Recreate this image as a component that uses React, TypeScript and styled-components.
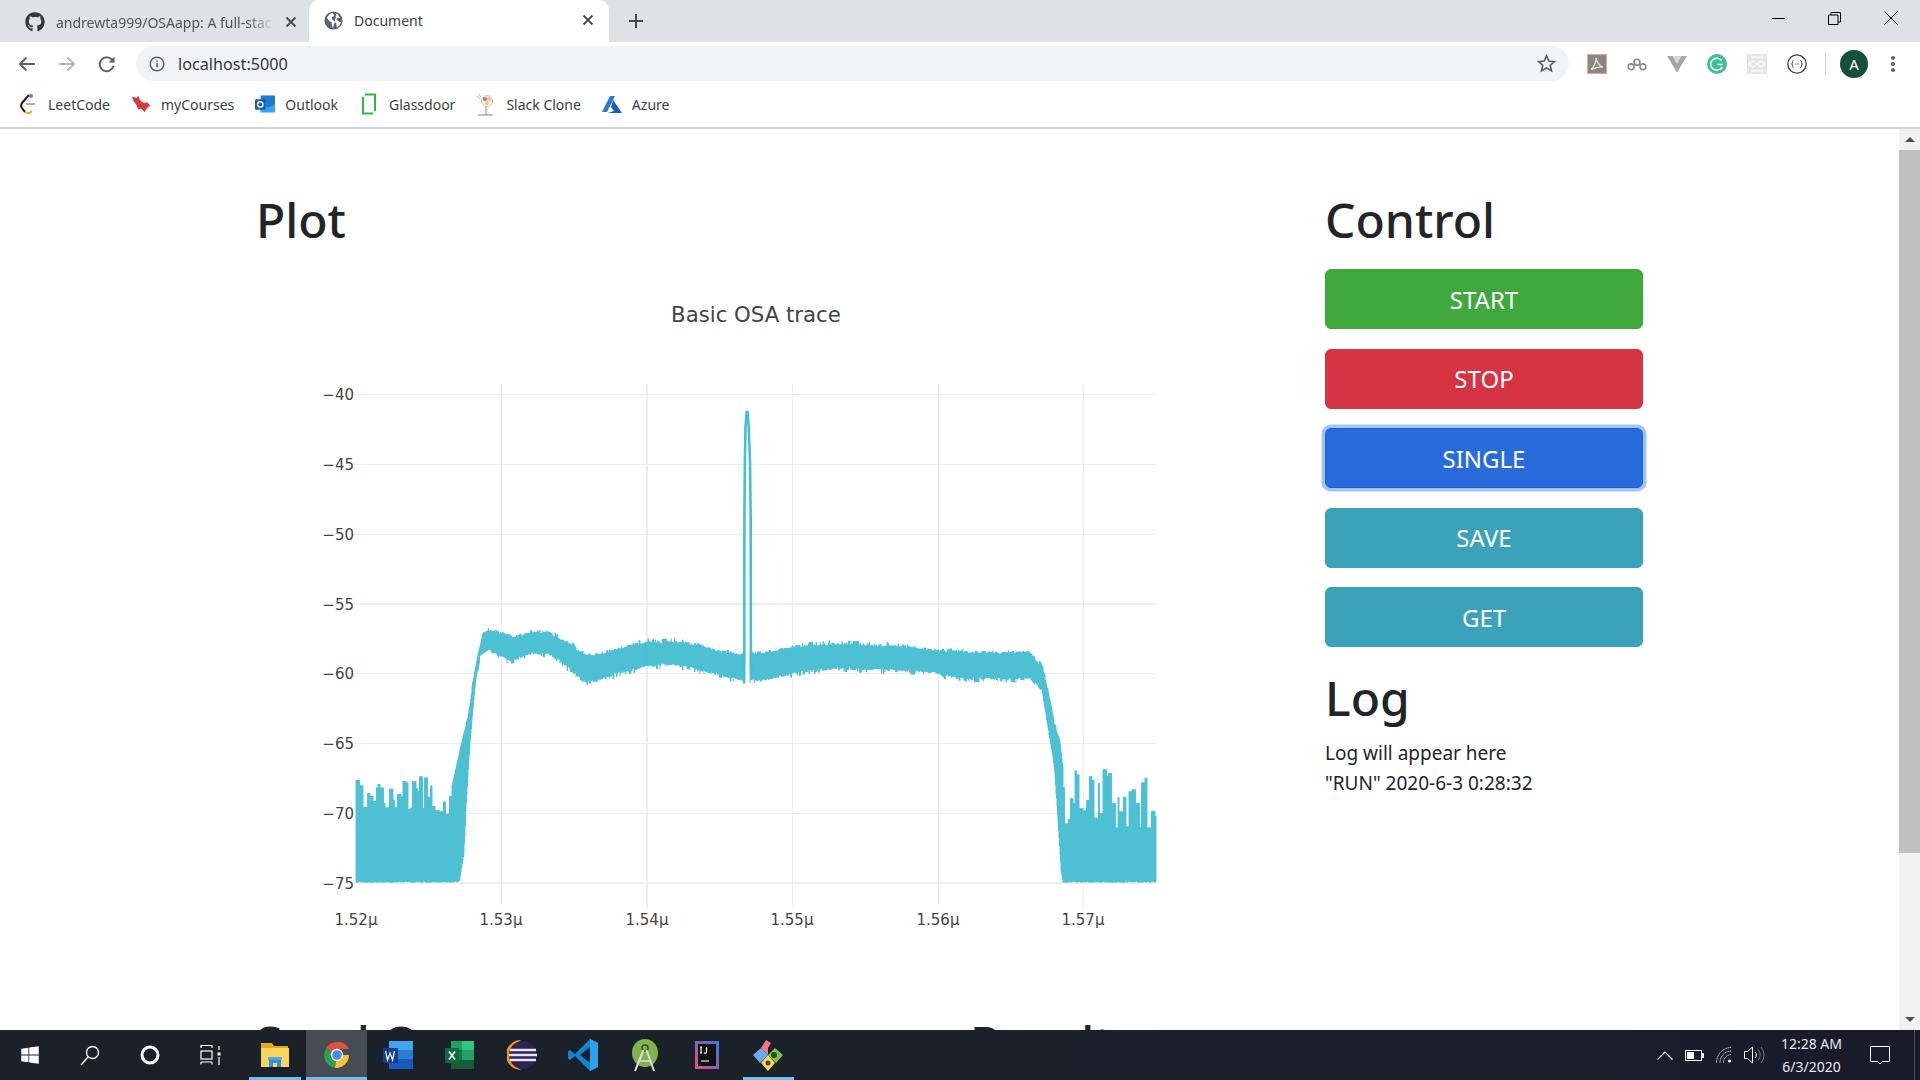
import styled, { createGlobalStyle } from "styled-components";
import { FaGithub, FaWindows } from "react-icons/fa";

const GlobalStyle = createGlobalStyle`
  html, body {
    margin: 0;
    padding: 0;
    height: 100%;
    overflow: hidden;
    background: #fff;
  }
  body {
    font-family: "Noto Sans", "Open Sans", sans-serif;
  }
  #root {
    height: 100%;
  }
`;

const colors = {
  frame: "#dee1e6",
  chromeText: "#3c4043",
  chromeIcon: "#5f6368",
  ink: "#212529",
  trace: "#47bed3",
  grid: "#eeeeee",
  tick: "#444444",
};

const Screen = styled.div`
  width: 1920px;
  height: 1080px;
  display: flex;
  flex-direction: column;
  overflow: hidden;
`;

/* ---------- browser chrome ---------- */

const TabStrip = styled.div`
  height: 42px;
  flex: none;
  display: flex;
  align-items: flex-end;
  background: ${colors.frame};
  padding-left: 14px;
`;

const Tab = styled.div<{ $active?: boolean }>`
  height: ${({ $active }) => ($active ? "42px" : "40px")};
  width: ${({ $active }) => ($active ? "300px" : "295px")};
  box-sizing: border-box;
  display: flex;
  align-items: center;
  gap: 11px;
  padding: 0 ${({ $active }) => ($active ? "15px" : "12px")} 0
    ${({ $active }) => ($active ? "15px" : "11px")};
  background: ${({ $active }) => ($active ? "#fff" : "transparent")};
  border-radius: 10px 10px 0 0;
  font-size: 14px;
  color: ${({ $active }) => ($active ? colors.chromeText : "#50545a")};
  margin-top: auto;
  padding-bottom: ${({ $active }) => ($active ? "2px" : "0")};
  svg {
    flex: none;
  }
`;

const TabTitle = styled.span<{ $fade?: boolean }>`
  flex: 1;
  overflow: hidden;
  white-space: nowrap;
  ${({ $fade }) =>
    $fade
      ? "mask-image: linear-gradient(to right, #000 88%, transparent 100%);"
      : ""}
`;

const NewTab = styled.div`
  width: 54px;
  display: flex;
  justify-content: center;
  align-self: center;
`;

const WindowButtons = styled.div`
  margin-left: auto;
  align-self: stretch;
  display: flex;
  align-items: center;
  padding: 0 22px 6px 0;
  gap: 43px;
`;

const Toolbar = styled.div`
  height: 43px;
  flex: none;
  display: flex;
  align-items: center;
  background: #fff;
  padding-left: 17px;
`;

const NavButtons = styled.div`
  display: flex;
  gap: 20px;
  margin-right: 19px;
`;

const AddressBar = styled.div`
  width: 1433px;
  height: 35px;
  display: flex;
  align-items: center;
  border-radius: 18px;
  background: #f1f3f4;
  padding: 0 13px 0 13px;
  box-sizing: border-box;
  font-size: 16.2px;
  color: #33363a;
  gap: 13px;
`;

const UrlText = styled.span`
  flex: 1;
`;

const Extensions = styled.div`
  display: flex;
  align-items: center;
  gap: 20px;
  margin-left: 18px;
`;

const Divider = styled.div`
  width: 1px;
  height: 21px;
  background: #c8cacc;
  margin: 0 -6px 0 -2px;
`;

const Avatar = styled.div`
  width: 28px;
  height: 28px;
  border-radius: 50%;
  background: #14503c;
  color: #fff;
  font-size: 15px;
  display: flex;
  align-items: center;
  justify-content: center;
`;

const MenuButton = styled.div`
  display: flex;
  margin-left: 2px;
`;

const BookmarksBar = styled.div`
  height: 44px;
  flex: none;
  box-sizing: border-box;
  display: flex;
  align-items: center;
  gap: 21px;
  padding: 0 0 4px 18px;
  background: #fff;
  border-bottom: 2px solid #d4d5d7;
`;

const Bookmark = styled.div`
  display: flex;
  align-items: center;
  gap: 10px;
  font-size: 14px;
  color: ${colors.chromeText};
`;

const BookmarkIcon = styled.span`
  width: 20px;
  display: flex;
  justify-content: center;
`;

/* ---------- page ---------- */

const Viewport = styled.div`
  flex: 1;
  min-height: 0;
  display: flex;
`;

const Page = styled.main`
  flex: 1;
  overflow: hidden;
  padding: 61px 0 0 256px;
  color: ${colors.ink};
`;

const TopRow = styled.div`
  display: grid;
  grid-template-columns: 1069px 318px;
`;

const BottomRow = styled.div`
  display: grid;
  grid-template-columns: 714px 1fr;
  margin-top: 43px;
`;

const Heading = styled.h1<{ $flush?: boolean }>`
  margin: 0 0 ${({ $flush }) => ($flush ? "0" : "10px")};
  font-size: 48px;
  line-height: 60px;
  font-weight: 500;
`;

const ChartFrame = styled.svg`
  display: block;
  width: 1000px;
  height: 720px;
`;

const ChartTitle = styled.text`
  font-family: "DejaVu Sans", sans-serif;
  font-size: 21.25px;
  fill: ${colors.tick};
  text-anchor: middle;
`;

const TickLabel = styled.text<{ $anchor: string }>`
  font-family: "DejaVu Sans", sans-serif;
  font-size: 15px;
  fill: ${colors.tick};
  text-anchor: ${({ $anchor }) => $anchor};
`;

const Controls = styled.div`
  display: flex;
  flex-direction: column;
  gap: 19.5px;
  margin: 19px 0 21px;
`;

const ActionButton = styled.button<{ $color: string; $focused?: boolean }>`
  height: 60px;
  width: 100%;
  border: 1px solid ${({ $color, $focused }) => ($focused ? "#1f5fc8" : $color)};
  border-radius: 6px;
  background: ${({ $color }) => $color};
  color: #fff;
  font-family: inherit;
  font-size: 24px;
  box-shadow: ${({ $focused }) => ($focused ? "0 0 0 3.5px #9fc5fd" : "none")};
`;

const LogLine = styled.div`
  font-size: 19px;
  line-height: 30px;
`;

const Scrollbar = styled.div`
  width: 21px;
  flex: none;
  display: flex;
  flex-direction: column;
  align-items: center;
  background: #f1f1f1;
`;

const ScrollArrow = styled.div<{ $down?: boolean }>`
  width: 0;
  height: 0;
  flex: none;
  margin: 8px 0;
  border-left: 5px solid transparent;
  border-right: 5px solid transparent;
  ${({ $down }) =>
    $down ? "border-top: 5px solid #505050;" : "border-bottom: 5px solid #505050;"}
`;

const ScrollThumb = styled.div`
  width: 100%;
  height: 703px;
  margin-bottom: auto;
  background: #c1c1c1;
`;

/* ---------- taskbar ---------- */

const Taskbar = styled.footer`
  height: 50px;
  flex: none;
  display: flex;
  align-items: stretch;
  background: linear-gradient(to right, #1b2128, #1b2129 50%, #191b2b);
  color: #fff;
`;

const SystemButton = styled.div`
  width: 60px;
  display: flex;
  align-items: center;
  justify-content: center;
`;

const AppList = styled.div`
  display: flex;
  margin-left: 4px;
`;

const AppButton = styled.div<{ $open?: boolean; $focused?: boolean }>`
  width: 61.7px;
  position: relative;
  display: flex;
  align-items: center;
  justify-content: center;
  background: ${({ $focused }) => ($focused ? "#454c54" : "transparent")};
  &::after {
    content: "";
    display: ${({ $open }) => ($open ? "block" : "none")};
    position: absolute;
    bottom: 0;
    height: 3px;
    left: ${({ $focused }) => ($focused ? "0" : "5px")};
    right: ${({ $focused }) => ($focused ? "0" : "5px")};
    background: #76b9ed;
  }
`;

const Tray = styled.div`
  margin-left: auto;
  display: flex;
  align-items: center;
  gap: 12px;
  border-right: 1px solid #4a4d5c;
  padding-right: 24px;
  margin-right: 5px;
`;

const Clock = styled.div`
  font-size: 14px;
  line-height: 23px;
  text-align: center;
  color: #e8e8ea;
  margin: 0 16px 0 4px;
  white-space: nowrap;
`;

/* ---------- trace ---------- */

const PLOT_LEFT = 356;
const PLOT_RIGHT = 1156;
const BOTTOM = 882;
const ORIGIN_X = 256;
const ORIGIN_Y = 250;

type Pt = [number, number];

const UPPER: Pt[] = [
  [356, 900], [451, 900], [452, 785], [457, 763], [463, 737], [468, 718], [473, 683],
  [477, 660], [483, 635], [490, 631], [500, 634], [513, 638], [533, 633], [548, 633],
  [560, 640], [573, 647], [580, 653], [593, 657], [610, 652], [633, 646], [653, 643],
  [680, 643], [700, 647], [720, 653], [742, 655], [753, 655], [793, 648], [833, 645],
  [900, 647], [940, 652], [1000, 654], [1030, 653], [1043, 670], [1050, 700],
  [1055, 727], [1060, 740], [1063, 767], [1066, 900], [1156, 900],
];

const LOWER: Pt[] = [
  [356, BOTTOM], [457, BOTTOM], [460, 880], [461, 872], [464, 852], [466, 810], [468, 776],
  [470, 745], [473, 710], [476, 678], [480, 655], [489, 649], [510, 660], [533, 652],
  [550, 653], [567, 665], [583, 680], [597, 680], [617, 672], [647, 665], [667, 663],
  [693, 667], [717, 673], [740, 679], [753, 678], [760, 680], [793, 672], [833, 667],
  [873, 668], [927, 670], [960, 677], [1013, 678], [1033, 677], [1042, 690], [1048, 727],
  [1052, 750], [1055, 773], [1058, 823], [1061, 870], [1063, BOTTOM], [1156, BOTTOM],
];

const interp = (pts: Pt[], x: number) => {
  for (let i = 1; i < pts.length; i++) {
    if (x <= pts[i][0]) {
      const [x0, y0] = pts[i - 1];
      const [x1, y1] = pts[i];
      return y0 + ((y1 - y0) * (x - x0)) / (x1 - x0);
    }
  }
  return pts[pts.length - 1][1];
};

const seeded = (seed: number) => () => {
  seed = (seed + 0x6d2b79f5) | 0;
  let t = Math.imul(seed ^ (seed >>> 15), 1 | seed);
  t = (t + Math.imul(t ^ (t >>> 7), 61 | t)) ^ t;
  return ((t ^ (t >>> 14)) >>> 0) / 4294967296;
};

const buildTrace = () => {
  const rand = seeded(1547);
  let d = "";
  let held = 800;
  let holdUntil = 0;
  let jitterTop = 0;
  let jitterBottom = 0;
  for (let x = PLOT_LEFT; x <= PLOT_RIGHT; x += 0.5) {
    if (x > 745.2 && x < 750) continue;
    const inLeftNoise = x < 460;
    const inRightNoise = x > 1056;
    let top = interp(UPPER, x);
    let bottom = interp(LOWER, x);
    if (inLeftNoise || inRightNoise) {
      if (x >= holdUntil) {
        const r = rand();
        held = inLeftNoise ? 815 - 40 * r : 828 - 60 * Math.pow(r, 1.2);
        holdUntil = x + 1 + rand() * 3;
      }
      top = Math.min(top, held);
      bottom += rand() * 1.2 - 0.4;
    } else {
      if (rand() > 0.55) jitterTop = rand() * 2.5 + (rand() > 0.85 ? 2.5 : 0);
      if (rand() > 0.55) jitterBottom = rand() * 2.5 + (rand() > 0.85 ? 3 : 0);
      top -= jitterTop;
      bottom += jitterBottom;
    }
    d += `M${x} ${top.toFixed(1)}L${x} ${bottom.toFixed(1)}`;
  }
  return d;
};

const TRACE_PATH = buildTrace();
const PEAK_PATH =
  "M743.5 681L744.3 653L744.4 520L744.9 460L745.5 427L746.7 412L747.5 412L748.7 427L750 460L750.7 520L750.9 653L751.5 680";

const Y_TICKS = [
  { label: "−40", y: 394 },
  { label: "−45", y: 464 },
  { label: "−50", y: 534 },
  { label: "−55", y: 604, heavy: true },
  { label: "−60", y: 673 },
  { label: "−65", y: 743 },
  { label: "−70", y: 813 },
  { label: "−75", y: 883, heavy: true },
];

const X_TICKS = [
  { label: "1.52μ", x: 356 },
  { label: "1.53μ", x: 501 },
  { label: "1.54μ", x: 647, heavy: true },
  { label: "1.55μ", x: 792 },
  { label: "1.56μ", x: 938 },
  { label: "1.57μ", x: 1083 },
];

const OsaChart = () => (
  <ChartFrame viewBox={`${ORIGIN_X} ${ORIGIN_Y} 1000 720`}>
    <ChartTitle x={756} y={322}>
      Basic OSA trace
    </ChartTitle>
    {X_TICKS.slice(1).map((t) => (
      <line
        key={t.x}
        x1={t.x}
        x2={t.x}
        y1={384}
        y2={908}
        stroke={colors.grid}
        strokeWidth={t.heavy ? 2 : 1}
        shapeRendering="crispEdges"
      />
    ))}
    {Y_TICKS.map((t) => (
      <line
        key={t.y}
        x1={354}
        x2={PLOT_RIGHT}
        y1={t.y}
        y2={t.y}
        stroke={colors.grid}
        strokeWidth={t.heavy ? 2 : 1}
        shapeRendering="crispEdges"
      />
    ))}
    {Y_TICKS.map((t) => (
      <TickLabel key={t.label} $anchor="end" x={354} y={t.y + 6}>
        {t.label}
      </TickLabel>
    ))}
    {X_TICKS.map((t) => (
      <TickLabel key={t.label} $anchor="middle" x={t.x} y={925}>
        {t.label}
      </TickLabel>
    ))}
    <path d={TRACE_PATH} stroke={colors.trace} strokeWidth={0.9} fill="none" />
    <path d={PEAK_PATH} stroke={colors.trace} strokeWidth={2.6} fill="none" />
  </ChartFrame>
);

/* ---------- icons ---------- */

const CloseIcon = () => (
  <svg width="12" height="12" viewBox="0 0 12 12">
    <path d="M1.5 1.5L10.5 10.5M10.5 1.5L1.5 10.5" stroke="#45484d" strokeWidth="1.8" />
  </svg>
);

const GlobeIcon = () => (
  <svg width="19" height="19" viewBox="0 0 20 20">
    <circle cx="10" cy="10" r="9.5" fill="#5f6368" />
    <path
      d="M9 1.500C6 3 4 5 3 7l3 4 2 .5V14l1.500 4.500 1-5 1.500-2.500-3-1.500-1-3 3-1.500zM13 2.500c2 1 3 3 4 4.500h-3l-1 2 3 2 2 1-2 3.500-2.500 2-.5-4-2-2.500 1-2.500z"
      fill="#fff"
    />
  </svg>
);

const PlusIcon = () => (
  <svg width="16" height="16" viewBox="0 0 16 16">
    <path d="M8 1v14M1 8h14" stroke="#45484d" strokeWidth="2" />
  </svg>
);

const MinimizeIcon = () => (
  <svg width="13" height="13" viewBox="0 0 13 13">
    <path d="M0 6.500h13" stroke="#000" strokeWidth="1" />
  </svg>
);

const RestoreIcon = () => (
  <svg width="13" height="13" viewBox="0 0 13 13">
    <path d="M.5 3h9.500v9.500H.5zM3 3V.5h9.500V10H10" fill="none" stroke="#000" strokeWidth="1" />
  </svg>
);

const WindowCloseIcon = () => (
  <svg width="14" height="14" viewBox="0 0 14 14">
    <path d="M.5.5l13 13M13.500.5l-13 13" stroke="#000" strokeWidth="1" />
  </svg>
);

const BackIcon = ({ color = "#5f6368" }: { color?: string }) => (
  <svg width="20" height="20" viewBox="0 0 20 20">
    <path d="M18 10H3M9.500 3.500L3 10l6.500 6.500" fill="none" stroke={color} strokeWidth="2" />
  </svg>
);

const ForwardIcon = () => (
  <svg width="20" height="20" viewBox="0 0 20 20">
    <path d="M2 10h15M10.500 3.500L17 10l-6.500 6.500" fill="none" stroke="#b4b6b9" strokeWidth="2" />
  </svg>
);

const ReloadIcon = () => (
  <svg width="20" height="20" viewBox="0 0 20 20">
    <path d="M16.500 12a7 7 0 1 1-1.600-6.500L17 8" fill="none" stroke="#5f6368" strokeWidth="2" />
    <path d="M17.500 2.500V8.500H11.500z" fill="#5f6368" />
  </svg>
);

const InfoIcon = () => (
  <svg width="16" height="16" viewBox="0 0 16 16">
    <circle cx="8" cy="8" r="6.800" fill="none" stroke="#5f6368" strokeWidth="1.500" />
    <path d="M7.200 7h1.600v4.500H7.200zM7.200 4.200h1.600v1.600H7.200z" fill="#5f6368" />
  </svg>
);

const StarIcon = () => (
  <svg width="19" height="19" viewBox="0 0 20 20">
    <path
      d="M10 2l2.400 5.400 5.900.6-4.400 3.900 1.300 5.800L10 14.700l-5.200 3 1.300-5.800L1.700 8l5.900-.6z"
      fill="none"
      stroke="#5f6368"
      strokeWidth="1.800"
    />
  </svg>
);

const PdfExtension = () => (
  <svg width="20" height="20" viewBox="0 0 20 20">
    <rect x=".5" y=".5" width="19" height="19" fill="#8d8484" stroke="#f0a59b" />
    <path
      d="M9 4c.5 3-2 9-5 11.500 3-1 8-3 12-2.500C13 12 10 8 9 4z"
      fill="none"
      stroke="#e9e4e4"
      strokeWidth="1.200"
    />
  </svg>
);

const GearsExtension = () => (
  <svg width="20" height="20" viewBox="0 0 22 20">
    <g fill="none" stroke="#8c8c8c" strokeWidth="1.800">
      <circle cx="4.500" cy="13" r="3.200" />
      <circle cx="11" cy="8" r="3.200" />
      <circle cx="17.500" cy="13" r="3.200" />
    </g>
  </svg>
);

const VueExtension = () => (
  <svg width="20" height="18" viewBox="0 0 21 19">
    <path d="M0 1h6l4.500 8L15 1h6L10.500 18.500z" fill="#a6a6a6" />
    <path d="M6 1h9l-4.500 8z" fill="#d6d6d6" />
  </svg>
);

const GrammarlyExtension = () => (
  <svg width="20" height="20" viewBox="0 0 20 20">
    <circle cx="10" cy="10" r="10" fill="#3fbf96" />
    <path d="M14.500 6.500a6 6 0 1 0 .5 6.500l-.5 2.500M10.500 10.500H15.500" fill="none" stroke="#fff" strokeWidth="1.500" />
  </svg>
);

const PatternExtension = () => (
  <svg width="20" height="20" viewBox="0 0 20 20">
    <rect width="20" height="20" fill="#e6e6e6" />
    <path d="M2 10l4-3 4 3 4-3 4 3-4 3-4-3-4 3zM4 3h12M4 17h12" fill="none" stroke="#fafafa" strokeWidth="1.500" />
  </svg>
);

const JsonExtension = () => (
  <svg width="20" height="20" viewBox="0 0 20 20">
    <circle cx="10" cy="10" r="9.200" fill="none" stroke="#444" strokeWidth="1.300" />
    <path
      d="M6.500 6.500c-1.500 0-1 2-1 2.500s-.5 1-1 1c.5 0 1 .5 1 1s-.5 2.500 1 2.500M13.500 6.500c1.500 0 1 2 1 2.500s.5 1 1 1c-.5 0-1 .5-1 1s.5 2.500-1 2.500"
      fill="none"
      stroke="#444"
    />
    <path d="M8 10h.8M9.700 10h.8M11.300 10h.8" stroke="#444" />
  </svg>
);

const MenuDots = () => (
  <svg width="6" height="18" viewBox="0 0 6 18">
    <circle cx="3" cy="3" r="2" fill="#5f6368" />
    <circle cx="3" cy="9" r="2" fill="#5f6368" />
    <circle cx="3" cy="15" r="2" fill="#5f6368" />
  </svg>
);

const LeetCodeMark = () => (
  <svg width="18" height="22" viewBox="0 0 18 22">
    <path d="M10 2L3 10c-1.500 2-1 4 .5 6l2.500 3" fill="none" stroke="#1d1d1d" strokeWidth="2" />
    <path d="M7 11h9" stroke="#b3b3b3" strokeWidth="2" />
    <path d="M6 19c2 2 5 1 7-1" fill="none" stroke="#f0a92c" strokeWidth="2" />
    <circle cx="12" cy="3" r="2" fill="#e2584f" />
  </svg>
);

const MyCoursesMark = () => (
  <svg width="22" height="20" viewBox="0 0 22 20">
    <path d="M1 2l5 1 2-2 2 5 4 3 4-1 3 4-4 3-2 4-4-4-3 1-2-5-3-4z" fill="#d73a3a" />
  </svg>
);

const OutlookMark = () => (
  <svg width="21" height="20" viewBox="0 0 21 20">
    <rect x="6" y="1" width="15" height="17" fill="#1f78d1" />
    <path d="M6 10l7.500 4L21 10v9H6z" fill="#35a4ea" />
    <rect x="0" y="5" width="11" height="11" rx="1" fill="#0f5fad" />
    <circle cx="5.500" cy="10.500" r="2.800" fill="none" stroke="#fff" strokeWidth="1.500" />
  </svg>
);

const GlassdoorMark = () => (
  <svg width="14" height="22" viewBox="0 0 14 22">
    <path d="M1 4V20.500H11M13 18V1.500H3" fill="none" stroke="#2fb744" strokeWidth="2" />
  </svg>
);

const SlackMark = () => (
  <svg width="20" height="23" viewBox="0 0 20 23">
    <path d="M2 22h15M10 22V12" stroke="#8f76b6" strokeWidth="1" />
    <circle cx="11" cy="8" r="5.500" fill="#fff" stroke="#c7b9db" />
    <circle cx="9" cy="6" r="2" fill="#e85a6f" />
    <circle cx="13" cy="6" r="2" fill="#e9b4d0" />
    <circle cx="11" cy="10" r="2.200" fill="#f5d53f" />
    <path d="M1 3l3 2M3 1l2 3" stroke="#7fc7e6" strokeWidth="1" />
  </svg>
);

const AzureMark = () => (
  <svg width="20" height="19" viewBox="0 0 20 19">
    <path d="M8 1h5L5 17H0z" fill="#2a7ad3" />
    <path d="M11 5l9 13H6l6-2-3-4z" fill="#1c5fb0" />
  </svg>
);

const SearchGlyph = () => (
  <svg width="20" height="21" viewBox="0 0 20 21">
    <circle cx="12.500" cy="7.500" r="6" fill="none" stroke="#fff" strokeWidth="1.300" />
    <path d="M8 12L1 20" stroke="#fff" strokeWidth="1.300" />
  </svg>
);

const CortanaGlyph = () => (
  <svg width="20" height="20" viewBox="0 0 20 20">
    <circle cx="10" cy="10" r="8" fill="none" stroke="#fff" strokeWidth="3" />
  </svg>
);

const TaskViewGlyph = () => (
  <svg width="21" height="20" viewBox="0 0 21 20">
    <path d="M1 3V.5h11V3M1 17v2.500M12 17v2.500M1 17h11" fill="none" stroke="#fff" strokeWidth="1.200" />
    <rect x="1" y="6" width="11" height="8" fill="none" stroke="#fff" strokeWidth="1.200" />
    <path d="M19 1v4M19 12v8" stroke="#fff" strokeWidth="1.200" />
    <rect x="17.500" y="7.500" width="3" height="3" fill="#fff" />
  </svg>
);

const ExplorerGlyph = () => (
  <svg width="28" height="26" viewBox="0 0 28 26">
    <path d="M0 1h11l2 3h14v21H0z" fill="#e6a817" />
    <rect x="0" y="6" width="28" height="19" fill="#fad45f" />
    <path d="M8 25v-8h12v8h-4v-4h-4v4z" fill="#2f8fd8" />
    <rect x="7" y="15" width="14" height="3" fill="#4aa9e8" />
  </svg>
);

const ChromeGlyph = () => (
  <svg width="28" height="28" viewBox="0 0 28 28">
    <path d="M14 14L3 7.500A13 13 0 0 1 26 8H14z" fill="#e2513f" />
    <path d="M14 14L3 7.500A13 13 0 0 0 12 27z" fill="#2ba24c" />
    <path d="M14 14H26A13 13 0 0 1 12 27z" fill="#f8c32c" />
    <circle cx="14" cy="14" r="6.200" fill="#fff" />
    <circle cx="14" cy="14" r="4.800" fill="#4a8be8" />
  </svg>
);

const WordGlyph = () => (
  <svg width="30" height="28" viewBox="0 0 30 28">
    <rect x="6" y="0" width="24" height="10" fill="#41a5ee" />
    <rect x="6" y="9" width="24" height="10" fill="#2b7cd3" />
    <rect x="6" y="18" width="24" height="10" fill="#185abd" />
    <rect x="0" y="7" width="15" height="15" rx="1" fill="#103f91" />
    <path d="M2.500 10l2 9 2.500-7 2.500 7 2-9" fill="none" stroke="#fff" strokeWidth="1.200" />
  </svg>
);

const ExcelGlyph = () => (
  <svg width="29" height="28" viewBox="0 0 29 28">
    <rect x="6" y="0" width="23" height="28" fill="#21a366" />
    <rect x="17" y="0" width="12" height="9" fill="#33c481" />
    <rect x="6" y="9" width="11" height="10" fill="#107c41" />
    <rect x="6" y="19" width="23" height="9" fill="#185c37" />
    <rect x="0" y="7" width="14" height="15" rx="1" fill="#0f6b3b" />
    <path d="M4 10.500l6 8M10 10.500l-6 8" stroke="#fff" strokeWidth="1.500" />
  </svg>
);

const EclipseGlyph = () => (
  <svg width="30" height="30" viewBox="0 0 30 30">
    <path d="M14 0A15 15 0 0 0 14 30A18 18 0 0 1 14 0z" fill="#f7941e" />
    <circle cx="16" cy="15" r="14" fill="#2c2255" />
    <path d="M3 10h26M2 15h28M3 20h26" stroke="#e8e4f3" strokeWidth="2.600" />
  </svg>
);

const VsCodeGlyph = () => (
  <svg width="30" height="32" viewBox="0 0 30 32">
    <path d="M22 0l8 4v24l-8 4L7 17 2 21l-2-1.500V12.500L2 11l5 4z" fill="#0e87d3" />
    <path d="M22 8L12 16l10 8z" fill="#1b2128" />
    <path d="M22 0l8 4v24l-8 4z" fill="#2ba3ea" />
  </svg>
);

const AndroidGlyph = () => (
  <svg width="28" height="33" viewBox="0 0 28 33">
    <ellipse cx="14" cy="14" rx="13" ry="14" fill="#82b34a" />
    <circle cx="14" cy="9" r="3" fill="none" stroke="#444" strokeWidth="1.500" />
    <path d="M12.500 11L4 32M15.500 11L23 32" stroke="#ddd" strokeWidth="2" />
    <path d="M8 22h12" stroke="#ddd" strokeWidth="1.500" />
  </svg>
);

const IntellijGlyph = () => (
  <svg width="24" height="28" viewBox="0 0 24 28">
    <rect width="24" height="28" fill="url(#ijEdge)" />
    <defs>
      <linearGradient id="ijEdge" x1="0" y1="1" x2="1" y2="0">
        <stop offset="0" stopColor="#e94b84" />
        <stop offset="1" stopColor="#2b7be0" />
      </linearGradient>
    </defs>
    <rect x="3" y="3" width="18" height="22" fill="#111" />
    <path d="M6 6v6M5 6h2M5 12h2M11.500 6v5c0 1.500-2 1.500-2.500.5M6 20h8" stroke="#fff" strokeWidth="1.200" fill="none" />
  </svg>
);

const GitKrakenGlyph = () => (
  <svg width="30" height="32" viewBox="0 0 30 32">
    <path d="M15 16L8 9l5-8 5 3-3 5z" fill="#f27a7a" />
    <path d="M15 16L8 9 0 16l7 8z" fill="#6fa9ef" />
    <path d="M15 16l7-7 8 7-7 8z" fill="#7cc14e" />
    <path d="M15 16l-7 8 7 8 7-8z" fill="#f3d563" />
    <circle cx="21" cy="16" r="3" fill="#2f4d1e" />
    <circle cx="15" cy="24" r="2.500" fill="#5a4a12" />
  </svg>
);

const ChevronUpGlyph = () => (
  <svg width="16" height="9" viewBox="0 0 16 9">
    <path d="M.5 8.500L8 1l7.500 7.500" fill="none" stroke="#fff" strokeWidth="1.200" />
  </svg>
);

const BatteryGlyph = () => (
  <svg width="19" height="11" viewBox="0 0 19 11">
    <rect x=".5" y=".5" width="16" height="10" fill="none" stroke="#fff" />
    <rect x="2" y="2" width="7" height="7" fill="#fff" />
    <rect x="17" y="3" width="2" height="5" fill="#fff" />
  </svg>
);

const WifiGlyph = () => (
  <svg width="16" height="16" viewBox="0 0 16 16">
    <g fill="none" stroke="#ddd" strokeWidth="1" strokeDasharray="1.300 .5">
      <path d="M.5 15.500A15 15 0 0 1 15.500 .5" />
      <path d="M4 15.500A11.500 11.500 0 0 1 15.500 4" />
      <path d="M7.500 15.500A8 8 0 0 1 15.500 7.500" />
    </g>
    <circle cx="13.500" cy="14" r="1.500" fill="#fff" />
  </svg>
);

const SpeakerGlyph = () => (
  <svg width="21" height="18" viewBox="0 0 21 18">
    <path d="M.5 5.500h3L8.500 1v16l-5-4.500h-3z" fill="none" stroke="#fff" />
    <path d="M11 6a4 4 0 0 1 0 6" fill="none" stroke="#fff" />
    <path d="M14 3.500a8 8 0 0 1 0 11M17 1a12 12 0 0 1 0 16" fill="none" stroke="#777" />
  </svg>
);

const NotificationGlyph = () => (
  <svg width="20" height="19" viewBox="0 0 20 19">
    <path d="M.5.500h19v15h-7L10 18l-2.500-2.500h-7z" fill="none" stroke="#fff" />
  </svg>
);

/* ---------- data ---------- */

const bookmarks = [
  { label: "LeetCode", icon: <LeetCodeMark /> },
  { label: "myCourses", icon: <MyCoursesMark /> },
  { label: "Outlook", icon: <OutlookMark /> },
  { label: "Glassdoor", icon: <GlassdoorMark /> },
  { label: "Slack Clone", icon: <SlackMark /> },
  { label: "Azure", icon: <AzureMark /> },
];

const apps = [
  { name: "explorer", icon: <ExplorerGlyph />, open: true },
  { name: "chrome", icon: <ChromeGlyph />, open: true, focused: true },
  { name: "word", icon: <WordGlyph /> },
  { name: "excel", icon: <ExcelGlyph /> },
  { name: "eclipse", icon: <EclipseGlyph /> },
  { name: "vscode", icon: <VsCodeGlyph /> },
  { name: "android", icon: <AndroidGlyph /> },
  { name: "intellij", icon: <IntellijGlyph /> },
  { name: "gitkraken", icon: <GitKrakenGlyph />, open: true },
];

const actions = [
  { label: "START", color: "#3fa83f" },
  { label: "STOP", color: "#d63343" },
  { label: "SINGLE", color: "#2a6bdc", focused: true },
  { label: "SAVE", color: "#3ca2b9" },
  { label: "GET", color: "#3ca2b9" },
];

export default function App() {
  return (
    <Screen>
      <GlobalStyle />
      <TabStrip>
        <Tab>
          <FaGithub size={20} color="#33373b" />
          <TabTitle $fade>andrewta999/OSAapp: A full-stac</TabTitle>
          <CloseIcon />
        </Tab>
        <Tab $active>
          <GlobeIcon />
          <TabTitle>Document</TabTitle>
          <CloseIcon />
        </Tab>
        <NewTab>
          <PlusIcon />
        </NewTab>
        <WindowButtons>
          <MinimizeIcon />
          <RestoreIcon />
          <WindowCloseIcon />
        </WindowButtons>
      </TabStrip>
      <Toolbar>
        <NavButtons>
          <BackIcon />
          <ForwardIcon />
          <ReloadIcon />
        </NavButtons>
        <AddressBar>
          <InfoIcon />
          <UrlText>localhost:5000</UrlText>
          <StarIcon />
        </AddressBar>
        <Extensions>
          <PdfExtension />
          <GearsExtension />
          <VueExtension />
          <GrammarlyExtension />
          <PatternExtension />
          <JsonExtension />
          <Divider />
          <Avatar>A</Avatar>
          <MenuButton>
            <MenuDots />
          </MenuButton>
        </Extensions>
      </Toolbar>
      <BookmarksBar>
        {bookmarks.map((b) => (
          <Bookmark key={b.label}>
            <BookmarkIcon>{b.icon}</BookmarkIcon>
            {b.label}
          </Bookmark>
        ))}
      </BookmarksBar>
      <Viewport>
        <Page>
          <TopRow>
            <div>
              <Heading $flush>Plot</Heading>
              <OsaChart />
            </div>
            <div>
              <Heading $flush>Control</Heading>
              <Controls>
                {actions.map((a) => (
                  <ActionButton key={a.label} $color={a.color} $focused={a.focused}>
                    {a.label}
                  </ActionButton>
                ))}
              </Controls>
              <Heading>Log</Heading>
              <LogLine>Log will appear here</LogLine>
              <LogLine>"RUN" 2020-6-3 0:28:32</LogLine>
            </div>
          </TopRow>
          <BottomRow>
            <Heading>Send Query</Heading>
            <Heading>Result</Heading>
          </BottomRow>
        </Page>
        <Scrollbar>
          <ScrollArrow />
          <ScrollThumb />
          <ScrollArrow $down />
        </Scrollbar>
      </Viewport>
      <Taskbar>
        <SystemButton>
          <FaWindows size={20} color="#fff" />
        </SystemButton>
        <SystemButton>
          <SearchGlyph />
        </SystemButton>
        <SystemButton>
          <CortanaGlyph />
        </SystemButton>
        <SystemButton>
          <TaskViewGlyph />
        </SystemButton>
        <AppList>
          {apps.map((a) => (
            <AppButton key={a.name} $open={a.open} $focused={a.focused}>
              {a.icon}
            </AppButton>
          ))}
        </AppList>
        <Tray>
          <ChevronUpGlyph />
          <BatteryGlyph />
          <WifiGlyph />
          <SpeakerGlyph />
          <Clock>
            12:28 AM
            <br />
            6/3/2020
          </Clock>
          <NotificationGlyph />
        </Tray>
      </Taskbar>
    </Screen>
  );
}
